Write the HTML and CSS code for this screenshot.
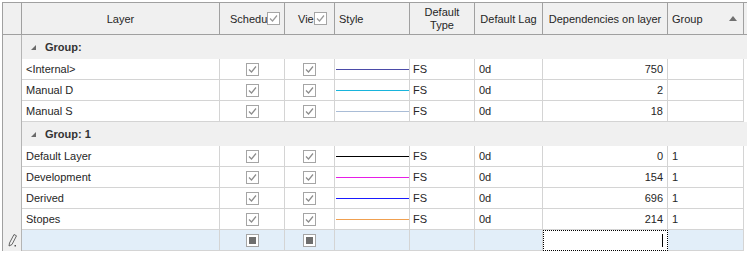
FILE: index.html
```html
<!DOCTYPE html>
<html lang="en">
<head>
    <meta charset="UTF-8">
    <title>Layers</title>
    <link rel="stylesheet" href="styles.css">
</head>
<body>
    <div class="grid">
        <div class="row head">
            <div class="cell ind"></div>
            <div class="cell center">Layer</div>
            <div class="cell check-head sched"><span class="clip">Schedu</span><span class="box"><svg width="13" height="13"><path d="M3 6.5 L5.5 9 L10 3.5" /></svg></span></div>
            <div class="cell check-head view"><span class="clip">Vie</span><span class="box"><svg width="13" height="13"><path d="M3 6.5 L5.5 9 L10 3.5" /></svg></span></div>
            <div class="cell">Style</div>
            <div class="cell center two">Default<br>Type</div>
            <div class="cell center">Default Lag</div>
            <div class="cell center">Dependencies on layer</div>
            <div class="cell sort">Group<span class="arrow"></span></div>
            <div class="cell filler"></div>
        </div>

        <div class="row group">
            <div class="cell ind"></div>
            <div class="group-cell"><span class="tri"></span>Group:</div>
        </div>
        <div class="row">
            <div class="cell ind"></div>
            <div class="cell">&lt;Internal&gt;</div>
            <div class="cell center"><span class="box"><svg width="13" height="13"><path d="M3 6.5 L5.5 9 L10 3.5" /></svg></span></div>
            <div class="cell center"><span class="box"><svg width="13" height="13"><path d="M3 6.5 L5.5 9 L10 3.5" /></svg></span></div>
            <div class="cell style"><span class="line internal"></span></div>
            <div class="cell type">FS</div>
            <div class="cell">0d</div>
            <div class="cell num">750</div>
            <div class="cell"></div>
            <div class="cell filler"></div>
        </div>
        <div class="row">
            <div class="cell ind"></div>
            <div class="cell">Manual D</div>
            <div class="cell center"><span class="box"><svg width="13" height="13"><path d="M3 6.5 L5.5 9 L10 3.5" /></svg></span></div>
            <div class="cell center"><span class="box"><svg width="13" height="13"><path d="M3 6.5 L5.5 9 L10 3.5" /></svg></span></div>
            <div class="cell style"><span class="line manual-d"></span></div>
            <div class="cell type">FS</div>
            <div class="cell">0d</div>
            <div class="cell num">2</div>
            <div class="cell"></div>
            <div class="cell filler"></div>
        </div>
        <div class="row">
            <div class="cell ind"></div>
            <div class="cell">Manual S</div>
            <div class="cell center"><span class="box"><svg width="13" height="13"><path d="M3 6.5 L5.5 9 L10 3.5" /></svg></span></div>
            <div class="cell center"><span class="box"><svg width="13" height="13"><path d="M3 6.5 L5.5 9 L10 3.5" /></svg></span></div>
            <div class="cell style"><span class="line manual-s"></span></div>
            <div class="cell type">FS</div>
            <div class="cell">0d</div>
            <div class="cell num">18</div>
            <div class="cell"></div>
            <div class="cell filler"></div>
        </div>

        <div class="row group">
            <div class="cell ind"></div>
            <div class="group-cell"><span class="tri"></span>Group: 1</div>
        </div>
        <div class="row">
            <div class="cell ind"></div>
            <div class="cell">Default Layer</div>
            <div class="cell center"><span class="box"><svg width="13" height="13"><path d="M3 6.5 L5.5 9 L10 3.5" /></svg></span></div>
            <div class="cell center"><span class="box"><svg width="13" height="13"><path d="M3 6.5 L5.5 9 L10 3.5" /></svg></span></div>
            <div class="cell style"><span class="line default"></span></div>
            <div class="cell type">FS</div>
            <div class="cell">0d</div>
            <div class="cell num">0</div>
            <div class="cell">1</div>
            <div class="cell filler"></div>
        </div>
        <div class="row">
            <div class="cell ind"></div>
            <div class="cell">Development</div>
            <div class="cell center"><span class="box"><svg width="13" height="13"><path d="M3 6.5 L5.5 9 L10 3.5" /></svg></span></div>
            <div class="cell center"><span class="box"><svg width="13" height="13"><path d="M3 6.5 L5.5 9 L10 3.5" /></svg></span></div>
            <div class="cell style"><span class="line development"></span></div>
            <div class="cell type">FS</div>
            <div class="cell">0d</div>
            <div class="cell num">154</div>
            <div class="cell">1</div>
            <div class="cell filler"></div>
        </div>
        <div class="row">
            <div class="cell ind"></div>
            <div class="cell">Derived</div>
            <div class="cell center"><span class="box"><svg width="13" height="13"><path d="M3 6.5 L5.5 9 L10 3.5" /></svg></span></div>
            <div class="cell center"><span class="box"><svg width="13" height="13"><path d="M3 6.5 L5.5 9 L10 3.5" /></svg></span></div>
            <div class="cell style"><span class="line derived"></span></div>
            <div class="cell type">FS</div>
            <div class="cell">0d</div>
            <div class="cell num">696</div>
            <div class="cell">1</div>
            <div class="cell filler"></div>
        </div>
        <div class="row">
            <div class="cell ind"></div>
            <div class="cell">Stopes</div>
            <div class="cell center"><span class="box"><svg width="13" height="13"><path d="M3 6.5 L5.5 9 L10 3.5" /></svg></span></div>
            <div class="cell center"><span class="box"><svg width="13" height="13"><path d="M3 6.5 L5.5 9 L10 3.5" /></svg></span></div>
            <div class="cell style"><span class="line stopes"></span></div>
            <div class="cell type">FS</div>
            <div class="cell">0d</div>
            <div class="cell num">214</div>
            <div class="cell">1</div>
            <div class="cell filler"></div>
        </div>

        <!-- new item row -->
        <div class="row new">
            <div class="cell ind pencil"><svg width="9" height="13" viewBox="0 0 9 13"><path d="M6 0.5 L8.5 1.8 L4 10.5 L1 12 L1.5 9 Z" /><rect x="6.5" y="11" width="1.5" height="1.5" /></svg></div>
            <div class="cell"></div>
            <div class="cell center"><span class="box partial"></span></div>
            <div class="cell center"><span class="box partial"></span></div>
            <div class="cell"></div>
            <div class="cell"></div>
            <div class="cell"></div>
            <div class="cell focus"><span class="caret"></span></div>
            <div class="cell"></div>
            <div class="cell filler"></div>
        </div>
    </div>
</body>
</html>
```

FILE: styles.css
```css
body {
    margin: 0;
    font-family: "Liberation Sans", Arial, sans-serif;
    font-size: 11px;
    color: #262626;
    background: #fff;
}
.grid {
    margin: 2px 0 0 2px;
    border-left: 1px solid #a0a0a0;
    border-top: 1px solid #a0a0a0;
}
.row {
    display: grid;
    grid-template-columns: 19px 198px 65px 50px 75px 65px 68px 125px 76px 1fr;
}
.cell {
    box-sizing: border-box;
    height: 21px;
    padding: 0 4px;
    display: flex;
    align-items: center;
    overflow: hidden;
    white-space: nowrap;
    border-right: 1px solid #d4d4d4;
    border-bottom: 1px solid #d4d4d4;
}
.cell.ind {
    background: #f0f0f0;
    border-right-color: #b4b4b4;
    border-bottom: none;
    padding: 0;
}
.cell.filler {
    border: none;
}
.center {
    justify-content: center;
}
.num {
    justify-content: flex-end;
}
.type {
    padding-left: 3px;
}

/* header */
.head .cell {
    height: 32px;
    background: #f0f0f0;
    border-color: #a0a0a0;
    border-bottom: 1px solid #a0a0a0;
}
.head .two {
    text-align: center;
    line-height: 13px;
}
.check-head {
    padding: 0 9px 0 0;
}
.check-head .clip {
    flex: 1;
}
.sched .clip {
    padding-left: 10px;
}
.view .clip {
    padding-left: 13px;
}
.head .box svg path {
    stroke: #9a9a9a;
}
.sort {
    justify-content: space-between;
    padding-right: 4px;
}
.arrow {
    width: 0;
    height: 0;
    border-left: 4px solid transparent;
    border-right: 4px solid transparent;
    border-bottom: 5px solid #707070;
    margin-right: 2px;
}

/* group rows */
.group-cell {
    grid-column: 2 / -1;
    height: 24px;
    background: #f0f0f0;
    display: flex;
    align-items: center;
    padding-left: 9px;
    font-weight: bold;
    color: #333;
}
.group .cell.ind {
    height: 24px;
}
.tri {
    width: 0;
    height: 0;
    border-left: 5px solid transparent;
    border-bottom: 5px solid #6a6a6a;
    margin: 0 9px 0 0;
}

/* checkboxes */
.box {
    box-sizing: border-box;
    width: 13px;
    height: 13px;
    border: 1px solid #a5a5a5;
    background: #fff;
    display: inline-block;
    position: relative;
    flex: none;
}
.box svg {
    position: absolute;
    left: -1px;
    top: -1px;
}
.box svg path {
    fill: none;
    stroke: #8c8c8c;
    stroke-width: 1.2;
}
.box.partial::after {
    content: "";
    position: absolute;
    left: 2px;
    top: 2px;
    width: 7px;
    height: 7px;
    background: #6e6e6e;
}

/* style lines */
.style {
    padding: 0 0 0 1px;
    align-items: flex-start;
}
.line {
    display: block;
    width: 73px;
    height: 1px;
    margin-top: 10px;
}
.internal { background: #4b4ba8; }
.manual-d { background: #18b4dc; }
.manual-s { background: #a9bcd6; }
.default { background: #000; }
.development { background: #e61ee6; }
.derived { background: #1a1aff; }
.stopes { background: #f0a050; }

/* new item row */
.new .cell {
    background: #e2eef9;
}
.new .cell.ind {
    background: #f0f0f0;
}
.new .cell.filler {
    background: #fff;
}
.pencil {
    justify-content: center;
    padding-right: 2px;
}
.pencil svg path {
    fill: none;
    stroke: #555;
    stroke-width: 0.9;
}
.pencil svg rect {
    fill: #555;
}
.new .focus {
    background: #fff;
    border: 1px dotted #000;
    justify-content: flex-end;
}
.caret {
    width: 1px;
    height: 13px;
    background: #000;
}
```
